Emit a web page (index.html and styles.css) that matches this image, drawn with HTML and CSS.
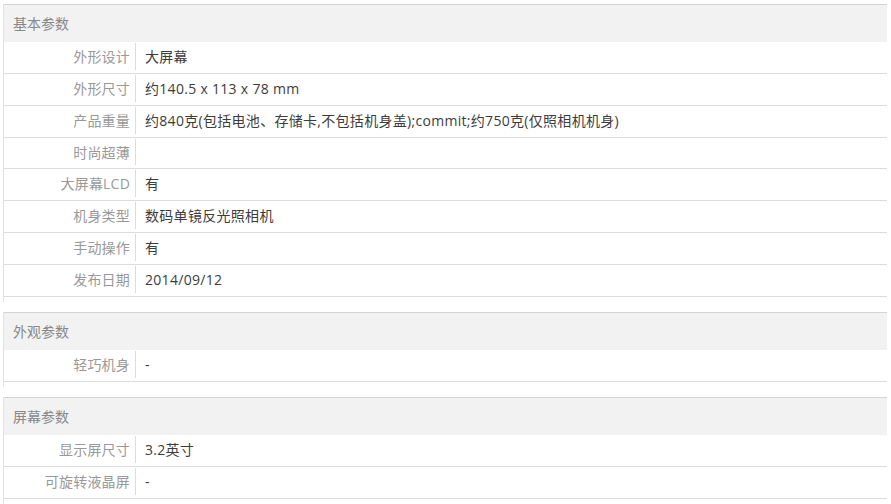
FILE: index.html
```html
<!DOCTYPE html>
<html lang="zh-CN">
<head>
<meta charset="utf-8">
<title>参数</title>
<link rel="stylesheet" href="styles.css">
</head>
<body>
<div class="section">
  <div class="sec-head">基本参数</div>
  <div class="row"><div class="label">外形设计</div><div class="value">大屏幕</div></div>
  <div class="row"><div class="label">外形尺寸</div><div class="value">约140.5 x 113 x 78 mm</div></div>
  <div class="row"><div class="label">产品重量</div><div class="value">约840克(包括电池、存储卡,不包括机身盖);commit;约750克(仅照相机机身)</div></div>
  <div class="row row-empty"><div class="label">时尚超薄</div><div class="value"></div></div>
  <div class="row"><div class="label">大屏幕LCD</div><div class="value">有</div></div>
  <div class="row"><div class="label">机身类型</div><div class="value">数码单镜反光照相机</div></div>
  <div class="row"><div class="label">手动操作</div><div class="value">有</div></div>
  <div class="row"><div class="label">发布日期</div><div class="value">2014/09/12</div></div>
</div>
<div class="section">
  <div class="sec-head">外观参数</div>
  <div class="row"><div class="label">轻巧机身</div><div class="value">-</div></div>
</div>
<div class="section">
  <div class="sec-head">屏幕参数</div>
  <div class="row"><div class="label">显示屏尺寸</div><div class="value">3.2英寸</div></div>
  <div class="row"><div class="label">可旋转液晶屏</div><div class="value">-</div></div>
</div>
</body>
</html>
```
FILE: styles.css
```css
html, body {
  background: #fff;
}
body {
  margin: 4px 4px 0 3px;
  font-family: "Open Sans", "Noto Sans CJK SC", sans-serif;
  font-size: 14px;
}
.section {
  border-top: 1px solid #d4d4d4;
  border-left: 1px solid #e2e2e2;
  padding-bottom: 5px;
  margin-bottom: 10px;
}
.sec-head {
  height: 37px;
  line-height: 37px;
  background: #f2f2f2;
  padding-left: 9px;
  color: #888;
  overflow: hidden;
}
.row {
  display: flex;
  box-sizing: border-box;
  height: 32px;
  padding: 1px 0 3px;
  border-bottom: 1px solid #dcdcdc;
}
.row-empty {
  height: 31px;
}
.label {
  width: 126px;
  flex: none;
  text-align: right;
  padding-right: 5px;
  border-right: 1px solid #dcdcdc;
  line-height: 27px;
  color: #999;
  letter-spacing: 0.2px;
  white-space: nowrap;
  overflow: hidden;
}
.value {
  padding-left: 9px;
  line-height: 28px;
  color: #3c3c3c;
  letter-spacing: 0.3px;
  white-space: nowrap;
  overflow: hidden;
}
```
